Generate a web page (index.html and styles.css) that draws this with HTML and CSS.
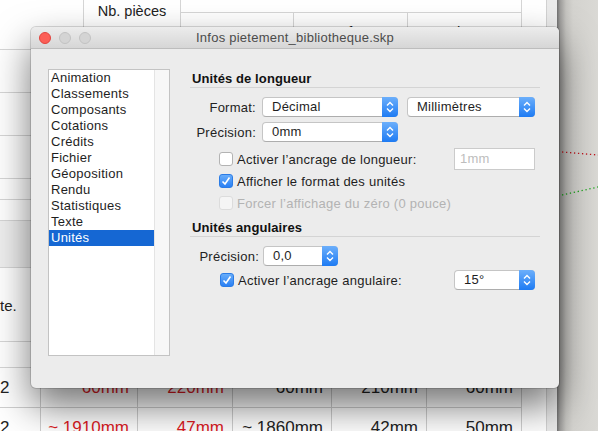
FILE: index.html
```html
<!DOCTYPE html>
<html>
  <head>
    <meta charset="UTF-8">
    <meta name="viewport" content="width=device-width, initial-scale=1.0">
    <link rel="stylesheet" href="styles.css">
    <title>Infos pietement_bibliotheque.skp</title>
  </head>
  <body>
    <div class="desk">
      <div class="report">
        <div class="sheet">
          <div class="head">
            <div class="hcell c-blank"></div>
            <div class="hcell c-count">Nb. pièces</div>
            <div class="hcell c-group"></div>
            <div class="hcell c-sub">Longueur</div>
            <div class="hcell c-sub">Surface</div>
            <div class="hcell c-sub">Volume</div>
          </div>
          <div class="line-row h43"></div>
          <div class="line-row h43"></div>
          <div class="line-row h43"></div>
          <div class="line-row h21"></div>
          <div class="line-row h21"></div>
          <div class="line-row grey-band"></div>
          <div class="line-row note">te.</div>
          <div class="line-row h26"></div>
          <div class="data-row">
            <div class="dcell first">2</div>
            <div class="dcell red">60mm</div>
            <div class="dcell red">220mm</div>
            <div class="dcell">60mm</div>
            <div class="dcell">210mm</div>
            <div class="dcell">60mm</div>
          </div>
          <div class="data-row">
            <div class="dcell first">2</div>
            <div class="dcell red">~ 1910mm</div>
            <div class="dcell red">47mm</div>
            <div class="dcell">~ 1860mm</div>
            <div class="dcell">42mm</div>
            <div class="dcell">50mm</div>
          </div>
        </div>
        <div class="scroller"></div>
      </div>
      <div class="viewport">
        <svg class="axes" viewBox="0 0 41 431" width="41" height="431">
          <line x1="5" y1="152" x2="41" y2="155" stroke="#c0141c" stroke-width="1.3" stroke-dasharray="1.3 2.7"/>
          <line x1="5" y1="195" x2="41" y2="187" stroke="#1aa51a" stroke-width="1.3" stroke-dasharray="1.3 2.7"/>
        </svg>
      </div>

      <div class="dialog">
        <div class="titlebar">
          <div class="lights">
            <span class="light close"></span>
            <span class="light"></span>
            <span class="light"></span>
          </div>
          <div class="title">Infos pietement_bibliotheque.skp</div>
          <div></div>
        </div>
        <div class="dialog-body">
          <div class="list">
            <ul class="items">
              <li>Animation</li>
              <li>Classements</li>
              <li>Composants</li>
              <li>Cotations</li>
              <li>Crédits</li>
              <li>Fichier</li>
              <li>Géoposition</li>
              <li>Rendu</li>
              <li>Statistiques</li>
              <li>Texte</li>
              <li class="selected">Unités</li>
            </ul>
            <div class="track"></div>
          </div>

          <div class="pane">
            <div class="section-title">Unités de longueur</div>

            <div class="form-row first">
              <label class="label">Format:</label>
              <div class="popup w136">
                <span class="popup-text">Décimal</span>
                <span class="popup-btn"><svg width="16" height="20" viewBox="0 0 16 20"><path d="M5 8.5 L8 5.5 L11 8.5 M5 11.5 L8 14.5 L11 11.5" fill="none" stroke="#fff" stroke-width="1.4"/></svg></span>
              </div>
              <div class="popup w128 gap">
                <span class="popup-text">Millimètres</span>
                <span class="popup-btn"><svg width="16" height="20" viewBox="0 0 16 20"><path d="M5 8.5 L8 5.5 L11 8.5 M5 11.5 L8 14.5 L11 11.5" fill="none" stroke="#fff" stroke-width="1.4"/></svg></span>
              </div>
            </div>

            <div class="form-row">
              <label class="label">Précision:</label>
              <div class="popup w136">
                <span class="popup-text">0mm</span>
                <span class="popup-btn"><svg width="16" height="20" viewBox="0 0 16 20"><path d="M5 8.5 L8 5.5 L11 8.5 M5 11.5 L8 14.5 L11 11.5" fill="none" stroke="#fff" stroke-width="1.4"/></svg></span>
              </div>
            </div>

            <div class="check-row top">
              <span class="box"></span>
              <span class="check-text">Activer l’ancrage de longueur:</span>
              <div class="textfield">1mm</div>
            </div>
            <div class="check-row">
              <span class="box on"><svg width="14" height="14" viewBox="0 0 14 14"><path d="M3.5 7.5 L6 10 L10.5 3.5" fill="none" stroke="#fff" stroke-width="1.6"/></svg></span>
              <span class="check-text">Afficher le format des unités</span>
            </div>
            <div class="check-row">
              <span class="box off"></span>
              <span class="check-text muted">Forcer l’affichage du zéro (0 pouce)</span>
            </div>

            <div class="section-title second">Unités angulaires</div>

            <div class="form-row first">
              <label class="label wide">Précision:</label>
              <div class="popup w75">
                <span class="popup-text">0,0</span>
                <span class="popup-btn"><svg width="16" height="20" viewBox="0 0 16 20"><path d="M5 8.5 L8 5.5 L11 8.5 M5 11.5 L8 14.5 L11 11.5" fill="none" stroke="#fff" stroke-width="1.4"/></svg></span>
              </div>
            </div>

            <div class="check-row angle">
              <span class="box on"><svg width="14" height="14" viewBox="0 0 14 14"><path d="M3.5 7.5 L6 10 L10.5 3.5" fill="none" stroke="#fff" stroke-width="1.6"/></svg></span>
              <span class="check-text">Activer l’ancrage angulaire:</span>
              <div class="popup w81 push">
                <span class="popup-text">15°</span>
                <span class="popup-btn"><svg width="16" height="20" viewBox="0 0 16 20"><path d="M5 8.5 L8 5.5 L11 8.5 M5 11.5 L8 14.5 L11 11.5" fill="none" stroke="#fff" stroke-width="1.4"/></svg></span>
              </div>
            </div>
          </div>
        </div>
      </div>
    </div>
  </body>
</html>
```

FILE: styles.css
```css
* {
  box-sizing: border-box;
}

body {
  margin: 0;
  font-family: 'Liberation Sans', Arial, sans-serif;
  color: #222222;
}

.desk {
  position: relative;
  display: flex;
  width: 598px;
  height: 431px;
  overflow: hidden;
  background: #ffffff;
}

/* report window behind the dialog */
.report {
  display: flex;
  width: 557px;
  height: 431px;
}

.sheet {
  width: 546px;
  background: #ffffff;
  font-size: 15px;
}

.head {
  display: grid;
  grid-template-columns: 84px 97px 113px 114px 114px 1fr;
  grid-template-rows: 13px 37px;
  border-bottom: 1px solid #d6d6d6;
  height: 50px;
}

.hcell {
  border-right: 1px solid #d6d6d6;
}

.c-blank {
  grid-row: 1 / 3;
}

.c-count {
  grid-row: 1 / 3;
  padding-top: 3px;
  text-align: center;
  font-size: 14.5px;
  color: #222222;
}

.c-group {
  grid-column: 3 / 6;
  border-bottom: 1px solid #d6d6d6;
}

.c-sub {
  grid-row: 2;
  padding-top: 10px;
  line-height: 18px;
  text-align: center;
}

.line-row {
  border-bottom: 1px solid #d6d6d6;
}

.h43 {
  height: 43px;
}

.h21 {
  height: 21px;
}

.h26 {
  height: 26px;
}

.grey-band {
  height: 47px;
  background: #efefef;
}

.note {
  height: 74px;
  padding-top: 29px;
  line-height: 18px;
}

.data-row {
  display: grid;
  grid-template-columns: 41px 97px 95px 99px 95px 95px;
  width: 522px;
  height: 40px;
  border-bottom: 1px solid #cfcfcf;
  font-size: 17px;
}

.dcell {
  display: flex;
  align-items: center;
  justify-content: flex-end;
  padding-right: 8px;
  border-right: 1px solid #cfcfcf;
}

.dcell.first {
  justify-content: flex-start;
  padding-left: 0;
}

.red {
  color: #dc1a1f;
}

.scroller {
  width: 11px;
  background: #ebebeb;
  border-left: 1px solid #d2d2d2;
}

.viewport {
  flex: 1;
  background: linear-gradient(to right, #707070 0, #9c9b99 3px, #c4c3bf 9px, #d4d3cf 16px, #dad9d5 100%);
}

.axes {
  display: block;
}

/* dialog window */
.dialog {
  position: absolute;
  left: 31px;
  top: 27px;
  width: 528px;
  height: 361px;
  display: flex;
  flex-direction: column;
  background: #ececec;
  border-radius: 5px;
  overflow: hidden;
  box-shadow: 0 0 0 1px rgba(0, 0, 0, 0.14), 0 18px 38px rgba(0, 0, 0, 0.55);
  font-size: 13px;
  letter-spacing: 0.25px;
}

.titlebar {
  display: grid;
  grid-template-columns: 1fr auto 1fr;
  align-items: center;
  height: 22px;
  padding: 0 8px;
  background: linear-gradient(#ececec, #d6d6d6);
  border-bottom: 1px solid #bdbdbd;
}

.lights {
  display: flex;
  gap: 8px;
}

.light {
  width: 12px;
  height: 12px;
  border-radius: 50%;
  background: #d4d4d4;
  border: 1px solid #c2c2c2;
}

.light.close {
  background: #fc5f57;
  border-color: #e0443e;
}

.title {
  color: #4b4b4b;
  font-size: 13px;
}

.dialog-body {
  display: flex;
  gap: 20px;
  padding: 20px 0 0 17px;
}

.list {
  display: flex;
  width: 122px;
  height: 287px;
  background: #ffffff;
  border: 1px solid #c3c3c3;
}

.items {
  width: 105px;
  margin: 0;
  padding: 0;
  list-style: none;
}

.items li {
  height: 16px;
  line-height: 16px;
  padding-left: 2px;
  color: #1e1e1e;
}

.items li.selected {
  background: #1567d3;
  color: #ffffff;
}

.track {
  flex: 1;
  background: #f7f7f7;
  border-left: 1px solid #e4e4e4;
}

.pane {
  display: flex;
  flex-direction: column;
  width: 350px;
}

.section-title {
  margin-top: 1px;
  padding-left: 2px;
  line-height: 17px;
  font-weight: bold;
  color: #111111;
  letter-spacing: 0.1px;
  border-bottom: 1px solid #d4d4d4;
}

.section-title.second {
  margin-top: 5px;
}

.form-row {
  display: flex;
  align-items: center;
  height: 20px;
  margin-top: 5px;
}

.form-row.first {
  margin-top: 9px;
}

.label {
  width: 66px;
  margin-right: 6px;
  text-align: right;
}

.label.wide {
  width: 69px;
  margin-right: 4px;
}

.popup {
  display: flex;
  height: 20px;
  background: #ffffff;
  border: 1px solid #c5c5c5;
  border-bottom-color: #adadad;
  border-radius: 4px;
}

.popup-text {
  flex: 1;
  padding-left: 9px;
  line-height: 18px;
  color: #1e1e1e;
}

.popup-btn {
  display: flex;
  width: 16px;
  margin: -1px -1px -1px 0;
  border-radius: 0 4px 4px 0;
  background: linear-gradient(#6caffb, #1e7bf3);
}

.w136 {
  width: 136px;
}

.w128 {
  width: 128px;
}

.w75 {
  width: 75px;
}

.w81 {
  width: 81px;
}

.gap {
  margin-left: 9px;
}

.push {
  margin-left: auto;
  margin-right: 5px;
}

.check-row {
  display: flex;
  align-items: center;
  height: 22px;
  padding-left: 29px;
}

.check-row.top {
  margin-top: 6px;
}

.check-row.angle {
  height: 20px;
  margin-top: 4px;
  padding-left: 30px;
}

.box {
  display: flex;
  width: 14px;
  height: 14px;
  margin-right: 4px;
  background: #ffffff;
  border: 1px solid #b3b3b3;
  border-radius: 3px;
}

.box svg {
  margin: -1px;
}

.box.on {
  background: linear-gradient(#68adfa, #2a80f4);
  border-color: #2b7ce6;
}

.box.off {
  background: #f5f5f5;
  border-color: #dcdcdc;
}

.check-text {
  color: #1e1e1e;
}

.check-text.muted {
  color: #b3b3b3;
}

.textfield {
  width: 81px;
  height: 22px;
  margin-left: auto;
  margin-right: 5px;
  padding-left: 5px;
  line-height: 20px;
  background: #ffffff;
  border: 1px solid #cbcbcb;
  color: #bdbdbd;
}
```
